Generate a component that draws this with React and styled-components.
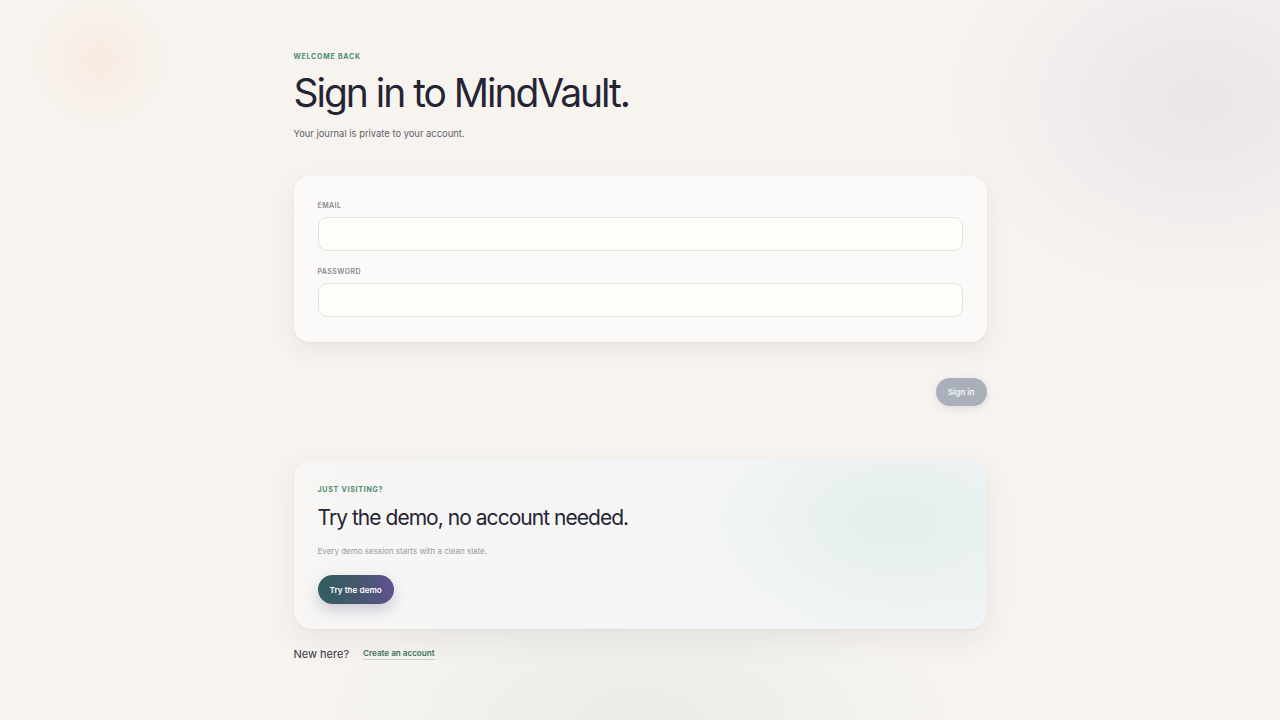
import React from 'react';
import styled, { createGlobalStyle } from 'styled-components';

const GlobalStyle = createGlobalStyle`
  html, body {
    margin: 0;
    padding: 0;
    height: 100%;
  }
  body {
    font-family: Inter, "Noto Sans", sans-serif;
    background: #f7f4f0;
    color: #24222e;
  }
`;

const Page = styled.div`
  min-height: 720px;
  background:
    radial-gradient(circle at 100px 60px, rgba(250, 222, 205, 0.4) 0, rgba(250, 222, 205, 0) 80px),
    radial-gradient(ellipse 260px 200px at 1200px 100px, rgba(228, 224, 230, 0.75) 0, rgba(228, 224, 230, 0) 100%),
    radial-gradient(ellipse 320px 160px at 640px 720px, rgba(224, 232, 222, 0.6) 0, rgba(224, 232, 222, 0) 100%),
    #f7f4f0;
  display: flex;
  justify-content: center;
`;

const Column = styled.main`
  width: 693px;
  padding-top: 52px;
  display: flex;
  flex-direction: column;
`;

const Eyebrow = styled.div`
  font-size: 7px;
  font-weight: 700;
  letter-spacing: 0.11em;
  text-transform: uppercase;
  color: #4f8a6e;
`;

const Title = styled.h1`
  margin: 8px 0 0;
  font-size: 39px;
  font-weight: 400;
  letter-spacing: -0.052em;
  line-height: 48px;
  color: #262433;
`;

const Lead = styled.p`
  margin: 11px 0 0;
  font-size: 9.4px;
  color: #615e68;
`;

const Card = styled.section`
  margin-top: ${p => p.$top || 0}px;
  border-radius: 16px;
  padding: 25px 24px;
  background: #fbfaf8;
  box-shadow: 0 8px 24px rgba(60, 50, 40, 0.08), 0 1px 3px rgba(60, 50, 40, 0.05);
  display: flex;
  flex-direction: column;
`;

const DemoCard = styled(Card)`
  border-radius: 18px;
  padding: 25px 24px 25px;
  background:
    radial-gradient(ellipse 200px 120px at 600px 60px, rgba(226, 238, 236, 0.9) 0, rgba(226, 238, 236, 0) 100%),
    linear-gradient(90deg, #f7f6f4 0%, #f5f5f7 55%, #f1f4f4 100%);
  box-shadow: 0 10px 30px rgba(60, 50, 60, 0.08), 0 1px 3px rgba(60, 50, 40, 0.05);
`;

const Label = styled.label`
  font-size: 7px;
  font-weight: 600;
  letter-spacing: 0.06em;
  color: #8a8790;
  text-transform: uppercase;
  margin-top: ${p => p.$gap || 0}px;
`;

const Input = styled.input`
  margin-top: 7px;
  height: 34px;
  box-sizing: border-box;
  border: 1px solid #e6e3de;
  border-radius: 9px;
  background: #fefdf9;
  outline: none;
  padding: 0 12px;
  font-family: inherit;
  font-size: 11px;
`;

const Actions = styled.div`
  display: flex;
  justify-content: flex-end;
  margin-top: 36px;
`;

const SignInButton = styled.button`
  height: 28px;
  padding: 0 12px;
  border: none;
  border-radius: 14px;
  background: #aab0b9;
  color: #f4f5f7;
  font-family: inherit;
  font-size: 8.2px;
  font-weight: 600;
  box-shadow: 0 2px 8px rgba(120, 120, 140, 0.2);
`;

const DemoTitle = styled.h2`
  margin: 10px 0 0;
  font-size: 21px;
  font-weight: 400;
  letter-spacing: -0.046em;
  line-height: 28px;
  color: #262433;
`;

const DemoText = styled.p`
  margin: 14px 0 0;
  font-size: 8px;
  color: #9a98a0;
`;

const DemoButton = styled.button`
  align-self: flex-start;
  margin-top: 19px;
  height: 29px;
  padding: 0 12px;
  border: none;
  border-radius: 15px;
  background: linear-gradient(90deg, #2e5f5e 0%, #48566f 55%, #5e5290 100%);
  color: #ffffff;
  font-family: inherit;
  font-size: 8.2px;
  font-weight: 600;
  box-shadow: 0 6px 14px rgba(80, 70, 120, 0.25);
`;

const Footer = styled.div`
  margin-top: 18px;
  display: flex;
  align-items: center;
  gap: 14px;
`;

const FooterText = styled.span`
  font-size: 11px;
  color: #35333d;
`;

const FooterLink = styled.a`
  font-size: 8.1px;
  font-weight: 600;
  color: #3c6e58;
  text-decoration: none;
  border-bottom: 1px solid #c2d6cb;
  padding-bottom: 1px;
`;

const App = () => {
  return (
    <>
      <GlobalStyle />
      <Page>
        <Column>
          <Eyebrow>Welcome back</Eyebrow>
          <Title>Sign in to MindVault.</Title>
          <Lead>Your journal is private to your account.</Lead>

          <Card $top={37}>
            <Label htmlFor="email">Email</Label>
            <Input id="email" type="email" />
            <Label htmlFor="password" $gap={16}>Password</Label>
            <Input id="password" type="password" />
          </Card>

          <Actions>
            <SignInButton>Sign in</SignInButton>
          </Actions>

          <DemoCard $top={54}>
            <Eyebrow>Just visiting?</Eyebrow>
            <DemoTitle>Try the demo, no account needed.</DemoTitle>
            <DemoText>Every demo session starts with a clean slate.</DemoText>
            <DemoButton>Try the demo</DemoButton>
          </DemoCard>

          <Footer>
            <FooterText>New here?</FooterText>
            <FooterLink href="#">Create an account</FooterLink>
          </Footer>
        </Column>
      </Page>
    </>
  );
};

export default App;
